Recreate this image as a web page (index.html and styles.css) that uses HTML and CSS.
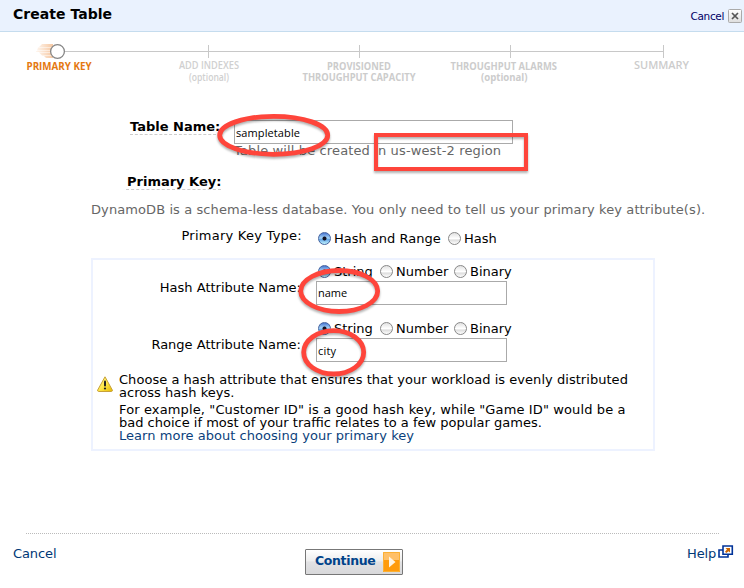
FILE: index.html
```html
<!DOCTYPE html>
<html lang="en">
<head>
<meta charset="utf-8">
<title>Create Table</title>
<link rel="stylesheet" href="styles.css">
</head>
<body>
<div class="dialog">
  <header class="header">
    <h1 class="title">Create Table</h1>
    <a class="close">Cancel
      <svg width="14" height="14" viewBox="0 0 14 14"><defs><linearGradient id="cl" x1="0" y1="0" x2="0" y2="1"><stop offset="0" stop-color="#fff"/><stop offset="1" stop-color="#ddd"/></linearGradient></defs><rect x=".5" y=".5" width="13" height="13" rx="1" fill="url(#cl)" stroke="#aaa"/><path d="M4 4l6 6M10 4l-6 6" stroke="#555" stroke-width="1.7"/></svg>
    </a>
  </header>

  <svg class="steps" width="744" height="68" viewBox="0 32 744 68">
    <defs><linearGradient id="trail"><stop offset="0" stop-color="#f4a460" stop-opacity=".1"/><stop offset="1" stop-color="#ee9a55" stop-opacity=".55"/></linearGradient></defs>
    <path d="M64 51.5H663.5M208.500 45V58M359.500 45V58M510.500 45V58M663.500 45V58" fill="none" stroke="#c8c8c8"/>
    <path d="M42 44h11v3h-14zM38 47.500h14v3h-15zM36 51h16v1h-16zM39 52.500h13v3h-10zM44 56h9v2h-7z" fill="url(#trail)"/>
    <circle cx="57.500" cy="51.500" r="6.900" fill="#fff" stroke="#858585" stroke-width="1.300"/>
    <g class="step-text">
      <text class="current" x="26.500" y="70" textLength="65" lengthAdjust="spacingAndGlyphs">PRIMARY KEY</text>
      <text class="light" x="179" y="69" textLength="60" lengthAdjust="spacingAndGlyphs">ADD INDEXES</text>
      <text class="light" x="189" y="81" textLength="40" lengthAdjust="spacingAndGlyphs">(optional)</text>
      <text x="327" y="70" textLength="64" lengthAdjust="spacingAndGlyphs">PROVISIONED</text>
      <text x="302.500" y="81" textLength="113" lengthAdjust="spacingAndGlyphs">THROUGHPUT CAPACITY</text>
      <text x="450.500" y="70" textLength="106.500" lengthAdjust="spacingAndGlyphs">THROUGHPUT ALARMS</text>
      <text x="481" y="81" textLength="46.500" lengthAdjust="spacingAndGlyphs">(optional)</text>
      <text class="medium" x="634" y="69" textLength="55" lengthAdjust="spacingAndGlyphs">SUMMARY</text>
    </g>
  </svg>

  <main class="form">
    <div class="table-row">
      <div class="heading table-label">Table Name:</div>
      <div class="table-field">
        <div class="input wide">sampletable</div>
        <div class="hint">Table will be created in us-west-2 region</div>
      </div>
    </div>
    <div class="heading key-heading">Primary Key:</div>
    <p class="intro">DynamoDB is a schema-less database. You only need to tell us your primary key attribute(s).</p>
    <div class="type-row">
      <div class="label type-label">Primary Key Type:</div>
      <div class="radios type-radios"><i class="radio on"></i><span class="r-range">Hash and Range</span><i class="radio"></i><span>Hash</span></div>
    </div>

    <section class="box">
      <div class="attribute">
        <div class="label">Hash Attribute Name:</div>
        <div>
          <div class="radios"><i class="radio on"></i><span class="r-string">String</span><i class="radio"></i><span class="r-number">Number</span><i class="radio"></i><span>Binary</span></div>
          <div class="input">name</div>
        </div>
      </div>
      <div class="attribute">
        <div class="label">Range Attribute Name:</div>
        <div>
          <div class="radios"><i class="radio on"></i><span class="r-string">String</span><i class="radio"></i><span class="r-number">Number</span><i class="radio"></i><span>Binary</span></div>
          <div class="input city">city</div>
        </div>
      </div>
      <div class="notice">
        <svg class="warn" width="16" height="16" viewBox="0 0 16 16"><defs><linearGradient id="w" x1="0" y1="0" x2="1" y2="1"><stop offset="0" stop-color="#fff9a0"/><stop offset=".5" stop-color="#ffe84a"/><stop offset="1" stop-color="#e5b800"/></linearGradient></defs><path d="M8 .8L15.300 14q.4 1.300-.8 1.500h-13Q.3 15.300.7 14z" fill="url(#w)" stroke="#c7a13a"/><path d="M8 5.500v4" stroke="#222" stroke-width="2" stroke-linecap="round"/><circle cx="8" cy="12.500" r="1.100" fill="#222"/></svg>
        <div class="copy">
          <p class="c1">Choose a hash attribute that ensures that your workload is evenly distributed<br>across hash keys.</p>
          <p class="c2"><span class="example">For example, "Customer ID" is a good hash key, while "Game ID" would be a</span><br>bad choice if most of your traffic relates to a few popular games.<br><a>Learn more about choosing your primary key</a></p>
        </div>
      </div>
    </section>
  </main>

  <footer class="footer">
    <a class="cancel">Cancel</a>
    <button class="continue"><span>Continue</span>
      <svg width="17" height="20" viewBox="0 0 17 20"><path fill="#ff9b0b" d="M0 0h17v20H0z"/><path fill="#ffc068" d="M0 0h17v8H0z"/><path d="M.5.5h16v19H.5z" fill="none" stroke="#fbb034"/><path d="M6 4.500v11l6.500-5.500z" fill="#fff4e0"/></svg>
    </button>
    <a class="help">Help<svg width="16" height="14" viewBox="0 0 16 14"><path d="M1 5h9v7H1z" fill="#fff" stroke="#039" stroke-width="1.600"/><path d="M5 1h9.300v8.300H5z" fill="#fff" stroke="#039" stroke-width="1.600"/><path d="M7.500 3H12v4.500l-1.500-1.300L8.300 8 7 6.700 9 4.500z" fill="#c60"/></svg></a>
  </footer>

  <svg class="marks" width="744" height="588" viewBox="0 0 744 588">
    <g fill="none" stroke="#fe453b" stroke-width="4.800">
      <ellipse cx="273.700" cy="135.300" rx="54" ry="19"/>
      <path d="M376 135H526V169H376z" stroke-width="4"/>
      <ellipse cx="339.200" cy="291" rx="38.500" ry="20.500"/>
      <ellipse cx="333.700" cy="352.300" rx="30" ry="21.700"/>
    </g>
  </svg>
</div>
</body>
</html>
```
FILE: styles.css
```css
* { box-sizing: border-box; }
body { margin: 0; background: #fff; font: 13px/15px "DejaVu Sans", Verdana, sans-serif; color: #000; }
p, h1 { margin: 0; }
.dialog { position: relative; width: 744px; height: 588px; overflow: hidden; display: flex; flex-direction: column; white-space: nowrap; }
.header { height: 32px; flex: none; background: #eaf2fe; border-bottom: 1px solid #c5dcee; display: flex; justify-content: space-between; padding: 7px 2px 0 13px; }
.title { font-size: 14px; line-height: 15px; font-weight: bold; letter-spacing: .03px; }
.close { display: flex; gap: 4px; font-size: 10.5px; line-height: 15px; letter-spacing: -.35px; color: #006; padding-top: 2px; }
.steps { display: block; flex: none; }
.step-text { font: bold 10.5px "Open Sans", sans-serif; fill: #ccc; }
.step-text .current { fill: #e47911; }
.step-text .light { font-weight: 600; fill: #d0d0d0; }
.step-text .medium { font-weight: 600; }
.form { height: 433px; flex: none; }
.heading { font-weight: bold; border-bottom: 1px dashed #ccc; height: 16px; }
.table-row { display: flex; padding-top: 19px; height: 74px; }
.table-label { width: 91px; margin-left: 130px; margin-right: 13px; }
.table-field { margin-top: 1px; }
.input { width: 191px; height: 24px; border: 1px solid #aaa; background: #fff; font: 11px/22px "Open Sans", sans-serif; padding-left: 1px; }
.input.wide { width: 279px; line-height: 23px; letter-spacing: .1px; }
.input.city { line-height: 24px; letter-spacing: .2px; }
.hint { color: #666; margin-top: -1px; letter-spacing: .13px; }
.key-heading { width: 95px; margin-left: 126px; padding-left: 1px; }
.intro { color: #666; margin: 12px 0 0 91px; letter-spacing: .09px; }
.type-row { display: flex; margin-top: 11px; height: 30px; }
.label { text-align: right; }
.type-label { width: 302px; letter-spacing: .25px; }
.radios { display: flex; height: 15px; padding-left: 2px; }
.type-radios { padding: 0; margin: 3px 0 0 16px; }
.radio { width: 13px; height: 13px; flex: none; margin: 1px 3px 0 0; border: 1px solid #888; border-radius: 50%; background: linear-gradient(#e2e2e2, #fff 50%, #dedede 65%, #fff); }
.radio.on { border-color: #45639f; background: radial-gradient(circle, #112 0 1.6px, transparent 2.4px), linear-gradient(#4875d0, #a7d6fa 45%, #65a5e6 60%, #c3f6ff); }
.r-range { width: 114px; }
.r-string { width: 46px; }
.r-number { width: 58px; }
.box { width: 564px; height: 193px; margin-left: 91px; border: 2px solid #edf2ff; padding-top: 4px; }
.attribute { display: flex; height: 57px; }
.attribute .label { width: 208px; margin: 16px 15px 0 0; }
.attribute .radios { height: 17px; }
.notice { display: flex; padding: 0 0 0 4px; margin-top: -5px; line-height: 13px; }
.warn { margin: 3px 6px 0 0; flex: none; }
.c1, .copy a { letter-spacing: .04px; }
.c2 { margin-top: 4px; }
.example { letter-spacing: .125px; }
.copy a { color: #0b3f7c; }
.footer { width: 694px; height: 55px; margin-left: 26px; display: flex; align-items: flex-start; background: linear-gradient(90deg, #bbb 50%, transparent 50%) 0 0 / 2px 1px repeat-x; }
.cancel, .help { color: #003876; margin-top: 13px; flex: none; letter-spacing: -.1px; }
.cancel { width: 292px; margin-left: -13px; }
.continue { width: 98px; height: 26px; flex: none; margin: 16px 0 0; border: 1px solid #777; border-radius: 1px; background: linear-gradient(#fff, #eee 45%, #e2e2e4 50%, #d8d8da); display: flex; justify-content: space-between; padding: 2px 2px 0 9px; font: bold 12.5px/18px "DejaVu Sans", sans-serif; letter-spacing: -.35px; color: #00438a; }
.help { margin-left: 284px; display: flex; gap: 2px; }
.help svg { margin-top: -1px; flex: none; }
.marks { position: absolute; left: 0; top: 0; pointer-events: none; filter: drop-shadow(0 2px 1px rgba(0,0,0,.3)); }
```
